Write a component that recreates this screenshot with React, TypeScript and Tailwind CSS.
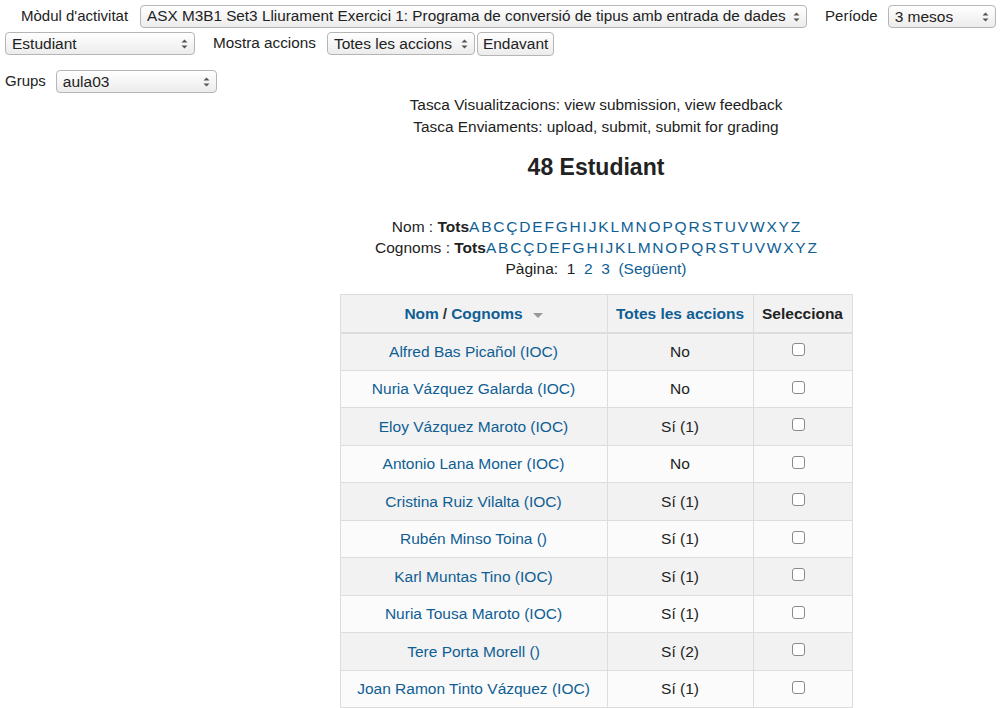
import React from 'react';

const letters = ['A','B','C','Ç','D','E','F','G','H','I','J','K','L','M','N','O','P','Q','R','S','T','U','V','W','X','Y','Z'];

const rows = [
  { name: 'Alfred Bas Picañol (IOC)', act: 'No' },
  { name: 'Nuria Vázquez Galarda (IOC)', act: 'No' },
  { name: 'Eloy Vázquez Maroto (IOC)', act: 'Sí (1)' },
  { name: 'Antonio Lana Moner (IOC)', act: 'No' },
  { name: 'Cristina Ruiz Vilalta (IOC)', act: 'Sí (1)' },
  { name: 'Rubén Minso Toina ()', act: 'Sí (1)' },
  { name: 'Karl Muntas Tino (IOC)', act: 'Sí (1)' },
  { name: 'Nuria Tousa Maroto (IOC)', act: 'Sí (1)' },
  { name: 'Tere Porta Morell ()', act: 'Sí (2)' },
  { name: 'Joan Ramon Tinto Vázquez (IOC)', act: 'Sí (1)' },
];

const Arrows = () => (
  <svg width="7" height="12" viewBox="0 0 7 12" className="shrink-0">
    <path d="M0.5 4.5 L3.5 1.5 L6.5 4.5 Z" fill="#555" />
    <path d="M0.5 7.5 L3.5 10.5 L6.5 7.5 Z" fill="#555" />
  </svg>
);

const Select = ({ value, className, text = 'text-[15.5px]' }: { value: string; className: string; text?: string }) => (
  <div
    className={`flex items-center justify-between h-[23px] pl-[6px] pr-[6px] border border-[#b5b5b5] rounded-[4px] bg-gradient-to-b from-white to-[#ececec] text-[#222] ${text} ${className}`}
  >
    <span className="whitespace-nowrap overflow-hidden mr-[3px]">{value}</span>
    <Arrows />
  </div>
);

const LetterBar = ({ label }: { label: string }) => (
  <div className="leading-[21px]">
    {label} : <b>Tots</b>
    {letters.map((l, i) => (
      <span key={l} className={`text-[#0f5e94] ${i > 0 ? 'ml-[1.8px]' : ''}`}>
        {l}
      </span>
    ))}
  </div>
);

export default function App() {
  return (
    <div className="w-[1004px] h-[708px] overflow-hidden bg-white text-[15px] text-[#222]" style={{ fontFamily: '"Liberation Sans", Arial, sans-serif' }}>
      {/* Filters */}
      <div className="pl-[5px] pt-[5px]">
        <div className="flex items-center h-[23px]">
          <span className="ml-[16px] mr-[12px]">Mòdul d'activitat</span>
          <Select
            value="ASX M3B1 Set3 Lliurament Exercici 1: Programa de conversió de tipus amb entrada de dades"
            className="w-[667px]"
            text="text-[15.3px]"
          />
          <span className="ml-[18px] mr-[10px]">Període</span>
          <Select value="3 mesos" className="w-[108px]" />
        </div>
        <div className="flex items-center h-[23px] mt-[4px]">
          <Select value="Estudiant" className="w-[190px]" />
          <span className="ml-[18px] mr-[11px] text-[15.3px]">Mostra accions</span>
          <Select value="Totes les accions" className="w-[148px]" />
          <div className="ml-[2px] h-[24px] px-[5px] flex items-center border border-[#b5b5b5] rounded-[4px] bg-gradient-to-b from-white to-[#ececec] text-[15.5px]">
            Endavant
          </div>
        </div>
        <div className="flex items-center h-[23px] mt-[15px]">
          <span className="mr-[10px]">Grups</span>
          <Select value="aula03" className="w-[161px]" />
        </div>
      </div>

      {/* Main */}
      <div className="pl-[188px] flex flex-col items-center text-[15.5px]">
        <div className="mt-[1px] text-center leading-[22px] text-[15.4px]">
          <div>Tasca Visualitzacions: view submission, view feedback</div>
          <div>Tasca Enviaments: upload, submit, submit for grading</div>
        </div>
        <div className="mt-[16px] font-bold text-[23px] leading-[26px] text-[#222]">48 Estudiant</div>
        <div className="mt-[36px] flex flex-col items-center">
          <LetterBar label="Nom" />
          <LetterBar label="Cognoms" />
          <div className="leading-[22px]">
            Pàgina:&nbsp; 1&nbsp; <span className="text-[#0f5e94]">2</span>&nbsp; <span className="text-[#0f5e94]">3</span>&nbsp; <span className="text-[#0f5e94]">(Següent)</span>
          </div>
        </div>
        <table className="mt-[14px] border-collapse border border-[#dddddd] w-[512px] table-fixed">
          <colgroup>
            <col className="w-[267px]" />
            <col className="w-[146px]" />
            <col className="w-[99px]" />
          </colgroup>
          <thead>
            <tr className="h-[38px] bg-[#f2f2f2] border-b-2 border-[#dddddd]">
              <th className="border-r border-[#dddddd] font-bold text-[#0f5e94]">
                <span className="inline-flex items-center">
                  Nom <span className="text-[#333] mx-[4px]">/</span> Cognoms
                  <svg width="10" height="6" viewBox="0 0 10 6" className="ml-[10px] mt-[6px]">
                    <path d="M0 0 L10 0 L5 5 Z" fill="#999" />
                  </svg>
                </span>
              </th>
              <th className="border-r border-[#dddddd] font-bold text-[#0f5e94] whitespace-nowrap">Totes les accions</th>
              <th className="font-bold text-[#222]">Selecciona</th>
            </tr>
          </thead>
          <tbody>
            {rows.map((r, i) => (
              <tr key={r.name} className={`h-[37.5px] border-b border-[#dddddd] ${i % 2 === 0 ? 'bg-[#f2f2f2]' : 'bg-[#fbfbfb]'}`}>
                <td className="border-r border-[#dddddd] text-center text-[#0f5e94]">{r.name}</td>
                <td className="border-r border-[#dddddd] text-center">{r.act}</td>
                <td className="text-center align-middle">
                  <span className="inline-block w-[13px] h-[13px] mr-[8px] border border-[#8a8a8a] rounded-[3px] bg-white -mt-[6px] align-middle" />
                </td>
              </tr>
            ))}
          </tbody>
        </table>
      </div>
    </div>
  );
}
